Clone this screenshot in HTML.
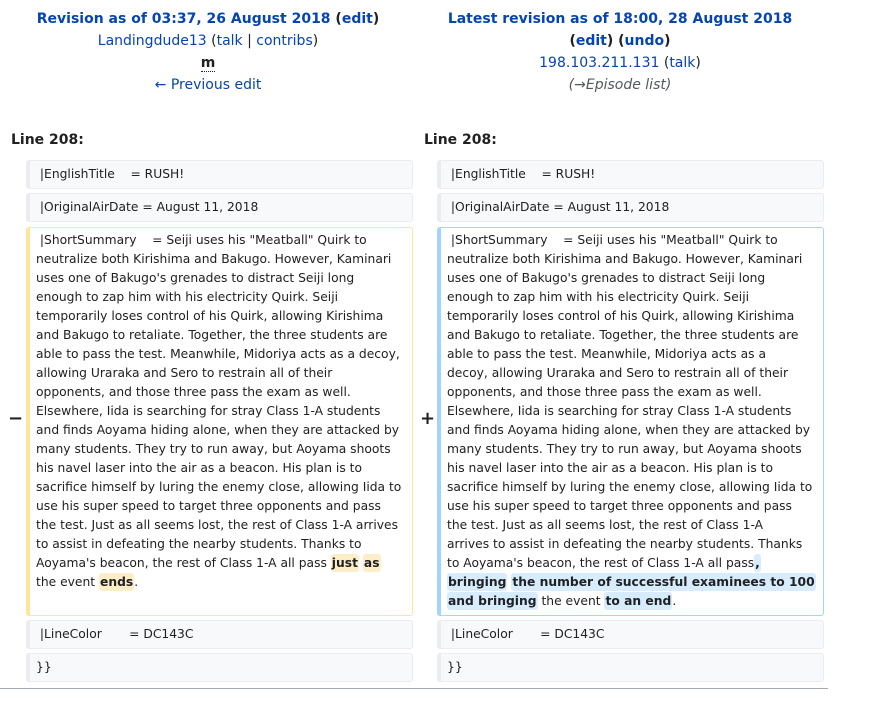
<!DOCTYPE html>
<html><head><meta charset="utf-8"><style>
body{margin:0;width:874px;height:705px;background:#fff;font-family:"DejaVu Sans","Liberation Sans",sans-serif;color:#202122;position:relative;overflow:hidden}
a{color:#0645ad;text-decoration:none}
.h{position:absolute;width:400px;text-align:center;font-size:14px;line-height:22px}
.h b{font-weight:bold}
.ln{position:absolute;top:132px;font-weight:bold;font-size:14px}
.box{position:absolute;box-sizing:border-box;border:1px solid #eaecf0;border-left:4px solid #eaecf0;background:#f8f9fa;border-radius:3px;font-size:12.3px;line-height:19px;padding:3px 0 0 6px;white-space:nowrap}
.del{background:#fff;border-color:#ffe49c}
.add{background:#fff;border-color:#a3d3ff}
.dw{background:#feeec8;font-weight:bold;border-radius:3px;padding:2px 1px}
.aw{background:#d8ecff;font-weight:bold;border-radius:3px;padding:2px 1px}
.sign{position:absolute;font-size:18px;font-weight:bold}
</style></head><body>
<div class="h" style="left:8px;top:8px"><b><a>Revision as of 03:37, 26 August 2018</a> (<a>edit</a>)</b><br><a>Landingdude13</a> (<a>talk</a> | <a>contribs</a>)<br><b style="border-bottom:1px dotted #202122">m</b><br><a>← Previous edit</a></div>
<div class="h" style="left:420px;top:8px"><b><a>Latest revision as of 18:00, 28 August 2018</a><br>(<a>edit</a>) (<a>undo</a>)</b><br><a>198.103.211.131</a> (<a>talk</a>)<br><i style="color:#54595d">(→Episode list)</i></div>
<div class="ln" style="left:11px">Line 208:</div>
<div class="ln" style="left:424px">Line 208:</div>

<div class="box" style="left:26px;top:160px;width:387px;height:29px;padding-top:4px">&nbsp;|EnglishTitle &nbsp;&nbsp; = RUSH!</div>
<div class="box" style="left:26px;top:193px;width:387px;height:29px;padding-top:4px">&nbsp;|OriginalAirDate = August 11, 2018</div>
<div class="sign" style="left:8px;top:408px">−</div>
<div class="box del" style="left:26px;top:227px;width:387px;height:389px">&nbsp;|ShortSummary &nbsp;&nbsp; = Seiji uses his "Meatball" Quirk to<br>neutralize both Kirishima and Bakugo. However, Kaminari<br>uses one of Bakugo's grenades to distract Seiji long<br>enough to zap him with his electricity Quirk. Seiji<br>temporarily loses control of his Quirk, allowing Kirishima<br>and Bakugo to retaliate. Together, the three students are<br>able to pass the test. Meanwhile, Midoriya acts as a decoy,<br>allowing Uraraka and Sero to restrain all of their<br>opponents, and those three pass the exam as well.<br>Elsewhere, Iida is searching for stray Class 1-A students<br>and finds Aoyama hiding alone, when they are attacked by<br>many students. They try to run away, but Aoyama shoots<br>his navel laser into the air as a beacon. His plan is to<br>sacrifice himself by luring the enemy close, allowing Iida to<br>use his super speed to target three opponents and pass<br>the test. Just as all seems lost, the rest of Class 1-A arrives<br>to assist in defeating the nearby students. Thanks to<br>Aoyama's beacon, the rest of Class 1-A all pass <span class="dw">just</span> <span class="dw">as</span><br>the event <span class="dw">ends</span>.</div>
<div class="box" style="left:26px;top:620px;width:387px;height:29px;padding-top:4px">&nbsp;|LineColor &nbsp;&nbsp;&nbsp;&nbsp;&nbsp; = DC143C</div>
<div class="box" style="left:26px;top:653px;width:387px;height:29px;padding-top:4px">}}</div>

<div class="box" style="left:437px;top:160px;width:387px;height:29px;padding-top:4px">&nbsp;|EnglishTitle &nbsp;&nbsp; = RUSH!</div>
<div class="box" style="left:437px;top:193px;width:387px;height:29px;padding-top:4px">&nbsp;|OriginalAirDate = August 11, 2018</div>
<div class="sign" style="left:420px;top:408px">+</div>
<div class="box add" style="left:437px;top:227px;width:387px;height:389px">&nbsp;|ShortSummary &nbsp;&nbsp; = Seiji uses his "Meatball" Quirk to<br>neutralize both Kirishima and Bakugo. However, Kaminari<br>uses one of Bakugo's grenades to distract Seiji long<br>enough to zap him with his electricity Quirk. Seiji<br>temporarily loses control of his Quirk, allowing Kirishima<br>and Bakugo to retaliate. Together, the three students are<br>able to pass the test. Meanwhile, Midoriya acts as a<br>decoy, allowing Uraraka and Sero to restrain all of their<br>opponents, and those three pass the exam as well.<br>Elsewhere, Iida is searching for stray Class 1-A students<br>and finds Aoyama hiding alone, when they are attacked by<br>many students. They try to run away, but Aoyama shoots<br>his navel laser into the air as a beacon. His plan is to<br>sacrifice himself by luring the enemy close, allowing Iida to<br>use his super speed to target three opponents and pass<br>the test. Just as all seems lost, the rest of Class 1-A<br>arrives to assist in defeating the nearby students. Thanks<br>to Aoyama's beacon, the rest of Class 1-A all pass<span class="aw">,</span><br><span class="aw">bringing</span> <span class="aw">the number of successful examinees to 100</span><br><span class="aw">and bringing</span> the event <span class="aw">to an end</span>.</div>
<div class="box" style="left:437px;top:620px;width:387px;height:29px;padding-top:4px">&nbsp;|LineColor &nbsp;&nbsp;&nbsp;&nbsp;&nbsp; = DC143C</div>
<div class="box" style="left:437px;top:653px;width:387px;height:29px;padding-top:4px">}}</div>

<div style="position:absolute;left:0;top:688px;width:828px;height:1px;background:#a2a9b1"></div>
</body></html>
